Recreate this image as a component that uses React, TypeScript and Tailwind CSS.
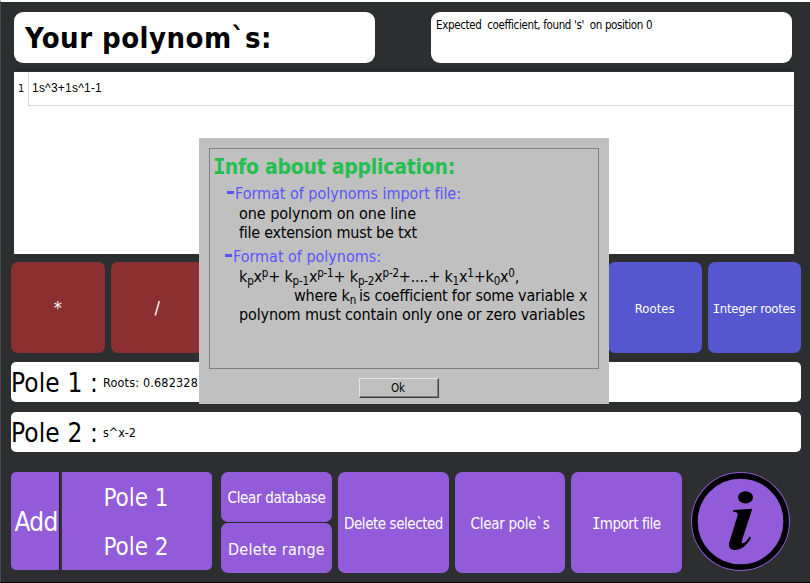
import { useLayoutEffect, useRef, type ReactNode } from "react";

type LabelProps = { width: number; className?: string; children: ReactNode };

/* A single line of text, tracked so that it fills the given width. */
function Label({ width, className = "", children }: LabelProps) {
  const ref = useRef<HTMLSpanElement>(null);
  useLayoutEffect(() => {
    const el = ref.current;
    if (!el) return;
    el.style.letterSpacing = "0px";
    const natural = el.getBoundingClientRect().width;
    const count = (el.textContent ?? "").length;
    el.style.letterSpacing = `${(width - natural) / count}px`;
  }, [width]);
  return (
    <span ref={ref} className={`inline-block shrink-0 whitespace-pre ${className}`}>
      {children}
    </span>
  );
}

/* Capital I with slab serifs. */
function SerifI() {
  return <span className="ml-[-0.05em] mr-[-0.03em] font-['DejaVu_Sans_Mono',monospace]">I</span>;
}

const Sub = ({ children }: { children: ReactNode }) => (
  <span className="relative top-[3px] text-[11.5px] leading-none">{children}</span>
);
const Sup = ({ children }: { children: ReactNode }) => (
  <span className="relative top-[-5px] text-[11.5px] leading-none">{children}</span>
);

function Operation({ className, children }: { className: string; children?: ReactNode }) {
  return (
    <button className={`flex min-w-0 flex-1 items-center justify-center rounded-[7px] text-white ${className}`}>
      {children}
    </button>
  );
}

function Action({ className, children }: { className: string; children: ReactNode }) {
  return (
    <button className={`flex items-center justify-center rounded-[7px] bg-[#915bda] text-white ${className}`}>
      {children}
    </button>
  );
}

function InfoIcon() {
  return (
    <svg viewBox="63 51 297 297" className="h-[99px] w-[99px]">
      <circle cx="211.5" cy="199.5" r="148.5" fill="#915bda" />
      <circle cx="211.5" cy="199.5" r="137" fill="none" stroke="#000" strokeWidth="17" />
      <ellipse cx="226.5" cy="127" rx="22.5" ry="18.5" />
      <path d="M190 165L247 161L216 256C213 265 218 268 225 262C231 257 235 250 239 245L243 248C233 268 215 285 195 285C181 285 174 276 178 262L202 184C205 174 202 171 189 170Z" />
    </svg>
  );
}

function InfoDialog() {
  return (
    <div className="absolute left-[199px] top-[138px] flex h-[266px] w-[410px] flex-col bg-[#c0c0c0] pl-[10px] pt-[10px] text-black">
      <div className="flex h-[221px] w-[390px] flex-col items-start border border-[#808080] text-[16px] leading-[19px]">
        <Label width={241} className="ml-[4px] mt-[4px] text-[21px] font-bold leading-[28px] text-[#22c04f]">
          <SerifI />nfo about application:
        </Label>
        <div className="ml-[17px] mt-[3px] flex h-[19px] text-[#5a55fb]">
          <span className="mr-px mt-[7px] h-[3px] w-[7px] bg-[#5a55fb]" />
          <Label width={226}>Format of polynoms import file:</Label>
        </div>
        <Label width={177} className="ml-[29px] mt-px">one polynom on one line</Label>
        <Label width={178} className="ml-[29px]">file extension must be txt</Label>
        <div className="ml-[15px] mt-[5px] flex h-[19px] text-[#5a55fb]">
          <span className="mr-px mt-[7px] h-[3px] w-[7px] bg-[#5a55fb]" />
          <Label width={148}>Format of polynoms:</Label>
        </div>
        <Label width={280} className="ml-[29px] mt-px h-[19px]">
          k<Sub>p</Sub>x<Sup>p</Sup>+ k<Sub>p-1</Sub>x<Sup>p-1</Sup>+ k<Sub>p-2</Sub>x<Sup>p-2</Sup>+....+ k<Sub>1</Sub>x<Sup>1</Sup>+k<Sub>0</Sub>x<Sup>0</Sup>,
        </Label>
        <Label width={293} className="ml-[84px] h-[19px]">where k<Sub>n </Sub>is coefficient for some variable x</Label>
        <Label width={346} className="ml-[29px]">polynom must contain only one or zero variables</Label>
      </div>
      <button className="ml-[150px] mt-[9px] flex h-[20px] w-[80px] items-center justify-center border border-b-[#404040] border-l-[#e3e3e3] border-r-[#404040] border-t-[#e3e3e3] text-[11.5px] shadow-[inset_-1px_-1px_0_#808080]">
        <Label width={14} className="mr-[2px] mt-[2px]">Ok</Label>
      </button>
    </div>
  );
}

export default function App() {
  return (
    <div className="relative flex h-[583px] w-[810px] flex-col overflow-hidden border-b border-l border-b-black border-l-[#4b4c4e] border-t-2 border-t-white bg-[#2d2e30] font-['DejaVu_Sans_Condensed','DejaVu_Sans',sans-serif] text-black">
      <header className="ml-[13px] mt-[10px] flex h-[51px] gap-[56px]">
        <div className="flex w-[361px] items-center rounded-[9px] bg-white pl-[11px]">
          <Label width={247} className="mt-px text-[29px] font-bold leading-[40px]">Your polynom`s:</Label>
        </div>
        <div className="flex w-[361px] items-start rounded-[9px] bg-white pl-[5px] pt-[5px]">
          <Label width={216} className="text-[11.5px] leading-[16px]">{"Expected  coefficient, found 's'  on position 0"}</Label>
        </div>
      </header>

      <section className="ml-[13px] mt-[6px] h-[185px] w-[780px] border-t border-[#1e1e1f] pt-[2px]">
        <div className="h-[182px] bg-white">
          <div className="flex h-[34px]">
            <div className="w-[15px] border-r border-[#d8d8d8] pl-[4px] text-[11px] leading-[33px]">1</div>
            <div className="flex-1 border-b border-[#d8d8d8] pl-[3px] font-['Liberation_Sans',Arial,sans-serif] text-[12px] leading-[32px]">
              <Label width={70}>1s^3+1s^1-1</Label>
            </div>
          </div>
        </div>
      </section>

      <section className="ml-[10px] mt-[8px] flex h-[91px] w-[790px] gap-[6px]">
        <Operation className="bg-[#8b2f30] text-[18px]">*</Operation>
        <Operation className="bg-[#8b2f30] text-[18px]">/</Operation>
        <Operation className="bg-[#8b2f30]" />
        <Operation className="bg-[#8b2f30]" />
        <Operation className="bg-[#5457cd]" />
        <Operation className="bg-[#5457cd]" />
        <Operation className="bg-[#5457cd] text-[13px]"><Label width={40} className="mt-[2px]">Rootes</Label></Operation>
        <Operation className="bg-[#5457cd] text-[13px]"><Label width={82} className="mt-[2px]"><SerifI />nteger rootes</Label></Operation>
      </section>

      <section className="ml-[10px] mt-[9px] flex w-[790px] flex-col gap-[10px]">
        <div className="flex h-[40px] items-center rounded-[5px] bg-white">
          <Label width={87} className="mr-[5px] mt-[2px] text-[26px]">Pole 1 :</Label>
          <Label width={95} className="mt-[2px] text-[12.5px]">Roots: 0.682328</Label>
        </div>
        <div className="flex h-[40px] items-center rounded-[5px] bg-white">
          <Label width={87} className="mr-[5px] mt-[2px] text-[26px]">Pole 2 :</Label>
          <Label width={33} className="mt-[2px] text-[12.5px]">s^x-2</Label>
        </div>
      </section>

      <footer className="ml-[10px] mt-[20px] flex h-[101px] w-[790px] text-white">
        <div className="mr-[9px] flex h-[98px] w-[201px]">
          <button className="flex w-[48px] items-center justify-center rounded-l-[5px] bg-[#915bda]">
            <Label width={43} className="ml-[2px] mt-[3px] text-[26px]">Add</Label>
          </button>
          <div className="w-[3px] border-l border-[#1c1c1d] bg-[#343436]" />
          <div className="flex flex-1 flex-col rounded-r-[5px] bg-[#915bda]">
            <button className="flex h-[49px] items-center justify-center"><Label width={65} className="mr-[2px] mt-[2px] text-[24px]">Pole 1</Label></button>
            <button className="flex h-[49px] items-center justify-center"><Label width={65} className="mr-[2px] mt-[2px] text-[24px]">Pole 2</Label></button>
          </div>
        </div>
        <div className="mr-[6px] flex w-[111px] flex-col gap-px">
          <Action className="h-[50px] text-[15px]"><Label width={98} className="mt-[3px]">Clear database</Label></Action>
          <Action className="h-[50px] text-[16px]"><Label width={97} className="mt-[3px]">Delete range</Label></Action>
        </div>
        <Action className="mr-[6px] w-[111px] text-[15px]"><Label width={99} className="mt-[3px]">Delete selected</Label></Action>
        <Action className="mr-[6px] w-[110px] text-[15px]"><Label width={79} className="mt-[3px]">Clear pole`s</Label></Action>
        <Action className="mr-[9px] w-[111px] text-[15px]"><Label width={68} className="mt-[3px]"><SerifI />mport file</Label></Action>
        <InfoIcon />
      </footer>

      <div className="absolute left-[-1px] top-[-2px]">
        <InfoDialog />
      </div>
    </div>
  );
}
